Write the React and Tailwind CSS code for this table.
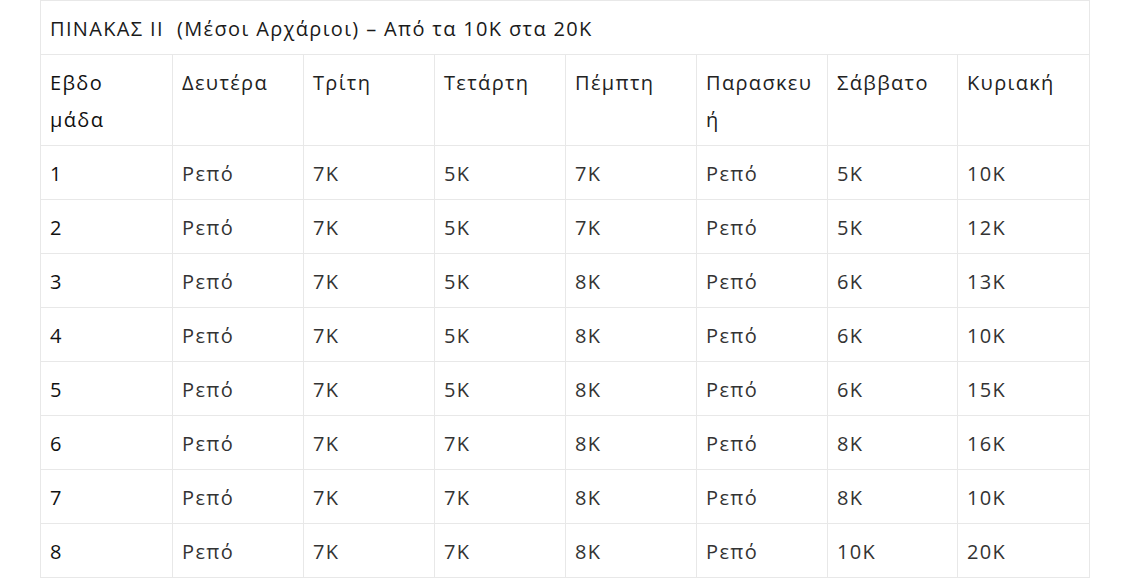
import React from "react";

const headers = ["Δευτέρα", "Τρίτη", "Τετάρτη", "Πέμπτη", "Παρασκευή", "Σάββατο", "Κυριακή"];
const rows = [
  ["1", "Ρεπό", "7K", "5K", "7K", "Ρεπό", "5K", "10K"],
  ["2", "Ρεπό", "7K", "5K", "7K", "Ρεπό", "5K", "12K"],
  ["3", "Ρεπό", "7K", "5K", "8K", "Ρεπό", "6K", "13K"],
  ["4", "Ρεπό", "7K", "5K", "8K", "Ρεπό", "6K", "10K"],
  ["5", "Ρεπό", "7K", "5K", "8K", "Ρεπό", "6K", "15K"],
  ["6", "Ρεπό", "7K", "7K", "8K", "Ρεπό", "8K", "16K"],
  ["7", "Ρεπό", "7K", "7K", "8K", "Ρεπό", "8K", "10K"],
  ["8", "Ρεπό", "7K", "7K", "8K", "Ρεπό", "10K", "20K"],
];

export default function App() {
  return (
    <div className="w-[1128px] h-[588px] bg-white overflow-hidden" style={{ fontFamily: '"Open Sans", sans-serif' }}>
      <table className="ml-[40px] w-[1049px] table-fixed border-collapse text-[20px] leading-[37px] tracking-[1.35px]">
        <colgroup>
          <col className="w-[132px]" />
          <col className="w-[131px]" />
          <col className="w-[131px]" />
          <col className="w-[131px]" />
          <col className="w-[131px]" />
          <col className="w-[131px]" />
          <col className="w-[130px]" />
          <col className="w-[132px]" />
        </colgroup>
        <tbody>
          <tr>
            <td colSpan={8} className="border border-[#e8e8e8] px-[9px] pt-[9px] pb-[7px] text-[#1a1a1a] font-normal whitespace-nowrap">
              ΠΙΝΑΚΑΣ ΙΙ&nbsp; (Μέσοι Αρχάριοι) – Από τα 10K στα 20K
            </td>
          </tr>
          <tr>
            <td className="border border-[#e8e8e8] px-[9px] pt-[9px] pb-[7px] align-top text-[#111]">
              Εβδο<br />μάδα
            </td>
            {headers.map((h) => (
              <td key={h} className="border border-[#e8e8e8] px-[9px] pt-[9px] pb-[7px] align-top text-[#222] whitespace-nowrap">
                {h === "Παρασκευή" ? (
                  <>
                    Παρασκευ<br />ή
                  </>
                ) : (
                  h
                )}
              </td>
            ))}
          </tr>
          {rows.map((r) => (
            <tr key={r[0]}>
              {r.map((c, i) => (
                <td
                  key={i}
                  className={
                    "border border-[#e8e8e8] px-[9px] pt-[9px] pb-[7px] align-top " +
                    (i === 0 ? "text-[#111]" : "text-[#333]")
                  }
                >
                  {c}
                </td>
              ))}
            </tr>
          ))}
        </tbody>
      </table>
    </div>
  );
}
